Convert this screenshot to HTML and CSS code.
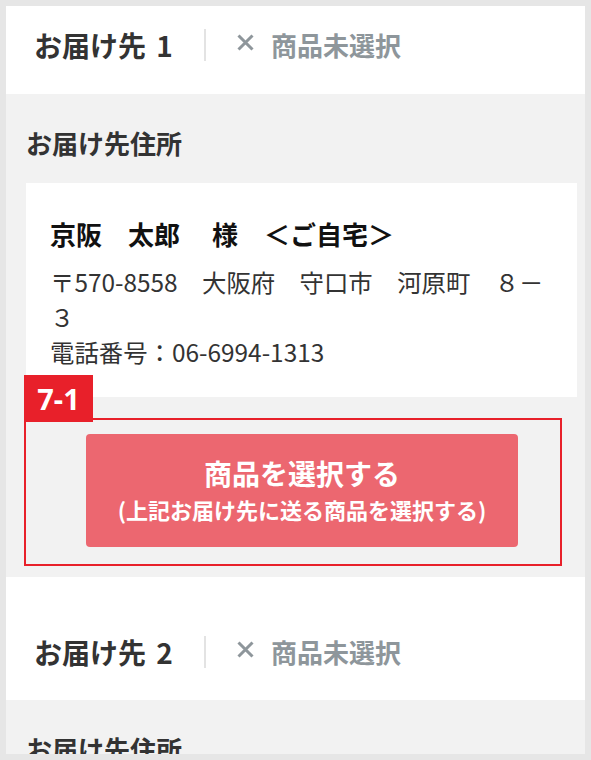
FILE: index.html
```html
<!DOCTYPE html>
<html lang="ja">
<head>
  <meta charset="UTF-8" />
  <meta name="viewport" content="width=device-width, initial-scale=1.0">
  <title>お届け先の選択</title>
  <link rel="stylesheet" href="styles.css">
</head>
<body>
  <div class="frame">
    <!-- お届け先 1 -->
    <div class="dest-head first">
      <h2 class="dest-title">お届け先 1</h2>
      <span class="dest-sep"></span>
      <span class="dest-status">
        <svg class="dest-x" width="17" height="17" viewBox="0 0 17 17"><path d="M1.5 1.5 L15.5 15.5 M15.5 1.5 L1.5 15.5" stroke="currentColor" stroke-width="3" fill="none"/></svg>
        商品未選択
      </span>
    </div>
    <div class="dest-body">
      <h3 class="addr-label">お届け先住所</h3>
      <div class="addr-card">
        <p class="addr-name">京阪　太郎　 様　＜ご自宅＞</p>
        <p class="addr-line">〒570-8558　大阪府　守口市　河原町　８－３</p>
        <p class="addr-tel">電話番号：06-6994-1313</p>
      </div>
      <div class="pick">
        <span class="note-frame"></span>
        <span class="note-badge">7-1</span>
        <button class="pick-btn">
          <span class="pick-main">商品を選択する</span>
          <span class="pick-sub">(上記お届け先に送る商品を選択する)</span>
        </button>
      </div>
    </div>

    <!-- お届け先 2 -->
    <div class="dest-head">
      <h2 class="dest-title">お届け先 2</h2>
      <span class="dest-sep"></span>
      <span class="dest-status">
        <svg class="dest-x" width="17" height="17" viewBox="0 0 17 17"><path d="M1.5 1.5 L15.5 15.5 M15.5 1.5 L1.5 15.5" stroke="currentColor" stroke-width="3" fill="none"/></svg>
        商品未選択
      </span>
    </div>
    <div class="dest-body">
      <h3 class="addr-label">お届け先住所</h3>
    </div>
  </div>
</body>
</html>
```

FILE: styles.css
```css
/* 全体 */
body {
  margin: 0;
  padding: 6px;
  background-color: #e6e6e6;
  font-family: "Noto Sans CJK JP", "Noto Sans", sans-serif;
  color: #333;
}

.frame {
  height: 748px;
  overflow: hidden;
  background-color: #f2f2f2;
}

/* 見出し */
.dest-head {
  display: flex;
  align-items: center;
  padding: 55px 28px 28px;
  background-color: #fff;
}

.dest-head.first {
  padding-top: 19px;
  padding-bottom: 29px;
}

.dest-title {
  margin: 0;
  font-size: 28px;
  line-height: 40px;
  font-weight: bold;
  color: #333;
  word-spacing: 4px;
}

.dest-sep {
  width: 2px;
  height: 32px;
  margin: 0 31px 0 31px;
  background-color: #e3e3e3;
}

.dest-status {
  display: flex;
  align-items: center;
  gap: 17px;
  font-size: 26px;
  line-height: 36px;
  font-weight: bold;
  color: #8e969b;
}

.dest-x {
  display: block;
  margin-top: -5px;
}

/* 住所 */
.dest-body {
  padding: 31px 8px 30px 20px;
}

.addr-label {
  margin: 0 0 22px;
  font-size: 26px;
  line-height: 36px;
  font-weight: bold;
  color: #333;
}

.addr-card {
  background-color: #fff;
  padding: 33px 24px 28px;
}

.addr-card p {
  margin: 0;
}

.addr-name {
  font-size: 26px;
  line-height: 36px;
  font-weight: bold;
  color: #111;
  margin-bottom: 12px !important;
}

.addr-line,
.addr-tel {
  font-size: 24.4px;
  line-height: 35px;
  color: #333;
}

/* ボタン */
.pick {
  position: relative;
  margin-top: 37px;
  padding: 0 59px 0 60px;
}

.pick-btn {
  display: flex;
  flex-direction: column;
  align-items: center;
  width: 100%;
  padding: 20px 0 22px;
  border: none;
  border-radius: 4px;
  background-color: #ec6770;
  color: #fff;
  font-family: inherit;
  font-weight: bold;
  cursor: pointer;
}

.pick-main {
  font-size: 28px;
  line-height: 38px;
}

.pick-sub {
  margin-top: 1px;
  font-size: 22px;
  line-height: 32px;
}

/* 注釈 */
.note-frame {
  position: absolute;
  left: -2px;
  top: -16px;
  width: 538px;
  height: 148px;
  box-sizing: border-box;
  border: 2px solid #e8202a;
}

.note-badge {
  position: absolute;
  left: -2px;
  top: -59px;
  width: 69px;
  height: 47px;
  background-color: #e8202a;
  color: #fff;
  font-family: "Noto Sans", sans-serif;
  font-size: 29px;
  line-height: 47px;
  font-weight: bold;
  text-align: center;
}
```
